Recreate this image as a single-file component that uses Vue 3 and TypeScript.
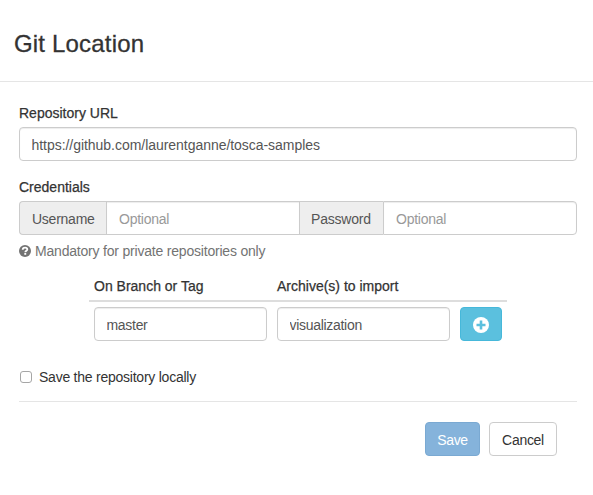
<script setup lang="ts">
import { ref } from 'vue'

const repositoryUrl = ref('https://github.com/laurentganne/tosca-samples')
const username = ref('')
const password = ref('')
const branch = ref('master')
const archive = ref('visualization')
const storeLocally = ref(false)
</script>

<template>
  <div class="modal">
    <header class="modal-header">
      <h3>Git Location</h3>
    </header>
    <form class="modal-body" @submit.prevent>
      <label class="label" for="url">Repository URL</label>
      <input id="url" v-model="repositoryUrl" class="control url" type="text" />

      <label class="label credentials">Credentials</label>
      <div class="group">
        <span class="addon user">Username</span>
        <input v-model="username" class="control" type="text" placeholder="Optional" />
        <span class="addon pass">Password</span>
        <input v-model="password" class="control" type="text" placeholder="Optional" />
      </div>
      <p class="help">
        <svg width="12" height="12" viewBox="0 0 12 12">
          <circle cx="6" cy="6" r="6" fill="#737373" />
          <path d="M3.7 4.7C3.7 3.1 4.7 2.6 6.1 2.6S8.3 3.3 8.3 4.4C8.3 5.7 6.3 5.7 6.3 7.3" fill="none" stroke="#fff" stroke-width="1.8" />
          <path d="M5.3 8h1.9v1.8H5.3z" fill="#fff" />
        </svg>
        <span>Mandatory for private repositories only</span>
      </p>

      <div class="imports">
        <div class="row head">
          <span>On Branch or Tag</span>
          <span>Archive(s) to import</span>
        </div>
        <div class="row fields">
          <input v-model="branch" class="control" type="text" />
          <input v-model="archive" class="control" type="text" />
          <button class="btn add" type="button" aria-label="Add">
            <svg width="16" height="16" viewBox="0 0 16 16">
              <circle cx="8" cy="8" r="8" fill="#fff" />
              <path d="M8 3.5v9M3.5 8h9" stroke="#5bc0de" stroke-width="2.6" />
            </svg>
          </button>
        </div>
      </div>

      <label class="check">
        <input v-model="storeLocally" type="checkbox" />
        <span>Save the repository locally</span>
      </label>

      <footer class="actions">
        <button class="btn save" type="submit" disabled>Save</button>
        <button class="btn cancel" type="button">Cancel</button>
      </footer>
    </form>
  </div>
</template>

<style>
body {
  margin: 0;
  background: #fff;
}
</style>

<style scoped>
* {
  box-sizing: border-box;
}
.modal {
  height: 495px;
  overflow: hidden;
  background: #fff;
  color: #333;
  font: 14px/20px "Liberation Sans", Arial, sans-serif;
  white-space: nowrap;
}
.modal-header {
  height: 82px;
  padding: 31px 14px 0;
  border-bottom: 1px solid #e5e5e5;
}
h3 {
  margin: 0;
  font-size: 24px;
  line-height: 26px;
  font-weight: 400;
  letter-spacing: 0.18px;
  -webkit-text-stroke: 0.3px #333;
}
.modal-body {
  padding: 21px 16px 0 19px;
}
.label {
  display: block;
  height: 24px;
  -webkit-text-stroke: 0.25px #333;
}
.credentials {
  margin-top: 16px;
}
.control {
  display: block;
  width: 100%;
  min-width: 0;
  height: 34px;
  margin: 0;
  padding: 2px 12px 0;
  border: 1px solid #ccc;
  border-radius: 4px;
  outline: 0;
  background: #fff;
  box-shadow: inset 0 1px 1px rgba(0, 0, 0, 0.075);
  color: #555;
  font: inherit;
  letter-spacing: -0.25px;
}
.fields .control {
  padding-left: 11.5px;
  letter-spacing: -0.3px;
}
.fields .control + .control {
  letter-spacing: -0.4px;
}
.control::placeholder {
  color: #999;
  opacity: 1;
}
.modal-body > .control,
.group {
  width: 558px;
}
.modal-body > .url {
  padding-left: 11.5px;
  letter-spacing: -0.04px;
}
.fields .control + .control {
  letter-spacing: -0.3px;
}
.group {
  display: grid;
  grid-template-columns: 87px 194px 83px 194px;
}
.group .control {
  border-radius: 0;
}
.group .control:last-child {
  border-radius: 0 4px 4px 0;
}
.addon {
  padding: 7px 0 0 12px;
  border: 1px solid #ccc;
  border-right: 0;
  background: #eee;
  color: #555;
  line-height: 20px;
  letter-spacing: -0.25px;
}
.user {
  border-radius: 4px 0 0 4px;
}
.pass {
  padding-left: 11px;
  border-left: 0;
  letter-spacing: -0.2px;
}
.help {
  display: flex;
  align-items: center;
  gap: 4px;
  height: 20px;
  margin: 6px 0 0;
  color: #737373;
  letter-spacing: -0.2px;
}
.imports {
  width: 418px;
  margin: 15px 0 0 70px;
}
.row {
  display: grid;
  grid-template-columns: 173px 173px 42px;
  column-gap: 10px;
  padding: 0 5px;
}
.head {
  height: 26px;
  border-bottom: 2px solid #ddd;
  -webkit-text-stroke: 0.25px #333;
}
.fields {
  padding-top: 5px;
}
.btn {
  height: 34px;
  margin: 0;
  padding: 2px 0 0;
  border: 1px solid;
  border-radius: 4px;
  font: inherit;
  letter-spacing: -0.3px;
}
.add {
  display: flex;
  align-items: center;
  justify-content: center;
  border-color: #46b8da;
  background: #5bc0de;
}
.check {
  display: flex;
  align-items: center;
  width: 200px;
  height: 20px;
  margin-top: 26px;
  letter-spacing: -0.24px;
}
.check input {
  appearance: none;
  width: 12px;
  height: 12px;
  margin: 0 7px 0 1px;
  border: 1px solid #a6a6a6;
  border-radius: 3px;
  background: #fff;
}
.actions {
  display: flex;
  justify-content: flex-end;
  gap: 9px;
  width: 558px;
  margin-top: 14px;
  padding: 20px 20px 0;
  border-top: 1px solid #e5e5e5;
}
.save {
  width: 55px;
  border-color: #7aa9d2;
  background: #85b3db;
  color: #fff;
}
.cancel {
  width: 68px;
  border-color: #ccc;
  background: #fff;
  color: #333;
}
</style>
